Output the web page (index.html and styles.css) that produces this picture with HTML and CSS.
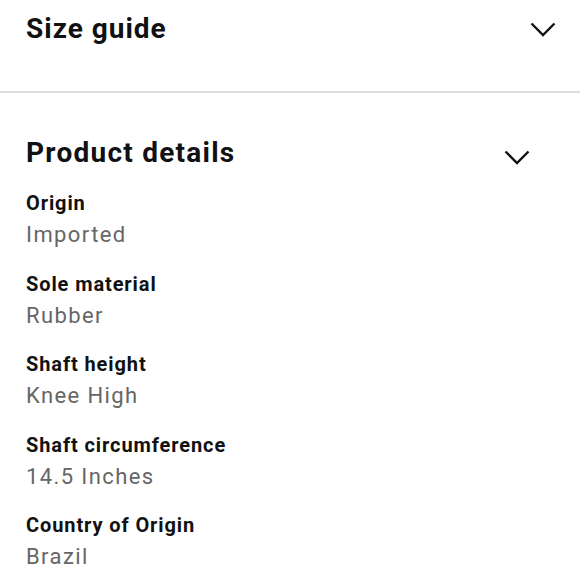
FILE: index.html
```html
<!DOCTYPE html>
<html>
<head>
<meta charset="utf-8">
<link rel="stylesheet" href="styles.css">
</head>
<body>
<section class="sec sec-size">
  <div class="head">
    <h2 class="title">Size guide</h2>
    <svg class="chev" width="26" height="15" viewBox="0 0 26 15"><path d="M1.5 1.5 L13 13 L24.5 1.5" fill="none" stroke="#111" stroke-width="2.4"/></svg>
  </div>
</section>
<section class="sec sec-details">
  <div class="head head2">
    <h2 class="title title-wide">Product details</h2>
    <svg class="chev chev2" width="26" height="15" viewBox="0 0 26 15"><path d="M1.5 1.5 L13 13 L24.5 1.5" fill="none" stroke="#111" stroke-width="2.4"/></svg>
  </div>
  <dl class="list">
    <div class="item"><dt>Origin</dt><dd>Imported</dd></div>
    <div class="item"><dt>Sole material</dt><dd>Rubber</dd></div>
    <div class="item"><dt>Shaft height</dt><dd>Knee High</dd></div>
    <div class="item"><dt>Shaft circumference</dt><dd>14.5 Inches</dd></div>
    <div class="item"><dt>Country of Origin</dt><dd>Brazil</dd></div>
  </dl>
</section>
</body>
</html>
```

FILE: styles.css
```css
html, body { margin: 0; padding: 0; background: #fff; }
body { font-family: Roboto, "Noto Sans", sans-serif; color: #111; width: 580px; overflow: hidden; }
.sec-size { height: 91px; border-bottom: 2px solid #dddddd; padding: 0 24px 0 26px; box-sizing: content-box; }
.head { display: flex; align-items: center; justify-content: space-between; }
.sec-size .head { height: 58px; }
.title { margin: 0; font-size: 28px; font-weight: 700; line-height: 34px; letter-spacing: 1px; }
.title-wide { letter-spacing: 1.25px; }
.sec-details { padding: 43px 50px 0 26px; }
.head2 { height: 52px; align-items: flex-start; }
.chev2 { margin-top: 14px; }
.list { margin: 0; padding: 0; }
.item { height: 80.5px; }
dt { font-size: 20px; font-weight: 700; line-height: 30px; letter-spacing: 0.9px; }
dd { margin: 0; font-size: 22px; line-height: 33px; color: #666; letter-spacing: 1.4px; }
```
